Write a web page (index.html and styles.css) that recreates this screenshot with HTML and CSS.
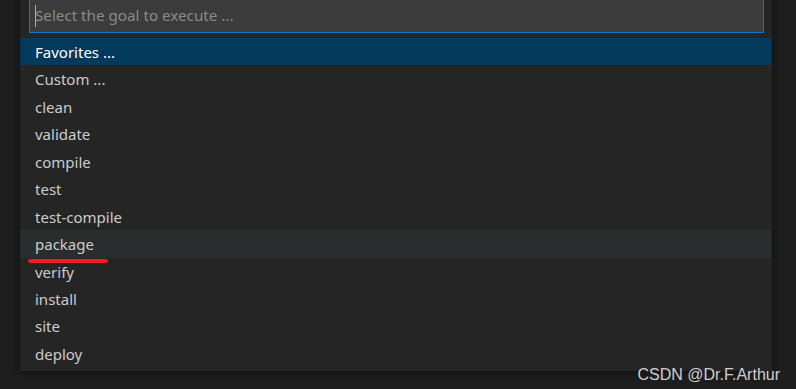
FILE: index.html
```html
<!DOCTYPE html>
<html lang="en">
<head>
    <meta charset="UTF-8">
    <meta name="viewport" content="width=device-width, initial-scale=1.0">
    <title>Select goal</title>
    <link rel="stylesheet" href="styles.css">
</head>
<body>
    <div class="quick-input">
        <div class="input-box">
            <span class="caret"></span>
            <span class="placeholder">Select the goal to execute ...</span>
        </div>
        <ul class="goal-list">
            <li class="goal selected">Favorites ...</li>
            <li class="goal">Custom ...</li>
            <li class="goal">clean</li>
            <li class="goal">validate</li>
            <li class="goal">compile</li>
            <li class="goal">test</li>
            <li class="goal">test-compile</li>
            <li class="goal hover">package<span class="mark"></span></li>
            <li class="goal">verify</li>
            <li class="goal">install</li>
            <li class="goal">site</li>
            <li class="goal">deploy</li>
        </ul>
    </div>

    <!-- watermark -->
    <div class="watermark">CSDN @Dr.F.Arthur</div>
</body>
</html>
```

FILE: styles.css
```css
body {
    background-color: #1e1e1e;
    margin: 0;
    padding: 0;
    font-family: "Noto Sans", "Open Sans", sans-serif;
    height: 389px;
    overflow: hidden;
    position: relative;
}

.quick-input {
    width: 752px;
    margin: -6px 0 0 20px;
    padding: 4px 0 4px 0;
    background-color: #252526;
    box-shadow: 0 0 8px 2px rgba(0, 0, 0, 0.4);
}
.input-box {
    margin: 0 8px 0 9px;
    height: 33px;
    border: 1px solid #0078d4;
    background-color: #3c3c3c;
    display: flex;
    align-items: center;
    padding-left: 5px;
}
.caret {
    width: 1px;
    height: 22px;
    background-color: #aeafad;
    margin-right: -1px;
}
.placeholder {
    color: #8a8a8a;
    font-size: 15.2px;
    margin-top: -1px;
}

.goal-list {
    list-style: none;
    margin: 5px 1px 0 0;
    padding: 0;
}
.goal {
    height: 27.45px;
    line-height: 29px;
    padding-left: 15px;
    color: #cccccc;
    font-size: 15px;
    position: relative;
}
.goal.selected {
    background-color: #04395e;
    color: #ffffff;
}
.goal.hover {
    background-color: #2a2d2e;
}
.mark {
    position: absolute;
    left: 8px;
    top: 28.5px;
    width: 80px;
    height: 4px;
    border-radius: 2px;
    background-color: #ed1b24;
}

.watermark {
    position: absolute;
    right: 16px;
    bottom: 5px;
    font-family: "Liberation Sans", Arial, sans-serif;
    font-size: 16px;
    color: #cfcfcf;
}
```
